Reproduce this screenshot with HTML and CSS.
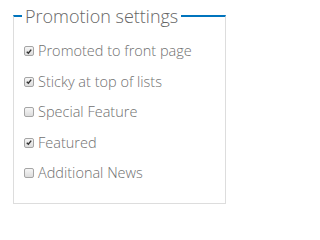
FILE: index.html
```html
<!DOCTYPE html>
<html>
<head>
<meta charset="utf-8">
<link rel="stylesheet" href="styles.css">
</head>
<body>
<fieldset class="promo">
  <legend class="promo-legend">Promotion settings</legend>
  <ul class="options">
    <li class="option"><span class="box checked"><svg viewBox="0 0 10 10" width="10" height="10"><path d="M2.2 5.2 L4.2 7.2 L7.8 2.6" fill="none" stroke="#333" stroke-width="1.8"/></svg></span><span class="label">Promoted to front page</span></li>
    <li class="option"><span class="box checked"><svg viewBox="0 0 10 10" width="10" height="10"><path d="M2.2 5.2 L4.2 7.2 L7.8 2.6" fill="none" stroke="#333" stroke-width="1.8"/></svg></span><span class="label">Sticky at top of lists</span></li>
    <li class="option"><span class="box"></span><span class="label">Special Feature</span></li>
    <li class="option"><span class="box checked"><svg viewBox="0 0 10 10" width="10" height="10"><path d="M2.2 5.2 L4.2 7.2 L7.8 2.6" fill="none" stroke="#333" stroke-width="1.8"/></svg></span><span class="label">Featured</span></li>
    <li class="option"><span class="box"></span><span class="label">Additional News</span></li>
  </ul>
</fieldset>
</body>
</html>
```
FILE: styles.css
```css
html, body {
  margin: 0;
  padding: 0;
  background: #fff;
}
body {
  padding: 7px 12px 0 13px;
  font-family: "Open Sans", sans-serif;
  color: #707070;
}
.promo {
  margin: 0;
  width: 213px;
  height: 197px;
  box-sizing: border-box;
  border: 1px solid #ddd;
  border-top: 2px solid #0074bd;
  padding: 0 8px 0 10px;
  min-width: 0;
}
.promo-legend {
  font-size: 18px;
  font-weight: 300;
  color: #666;
  padding: 0 3px;
  line-height: 18px;
  margin-left: -2px;
}
.options {
  list-style: none;
  margin: 0;
  padding: 16px 0 0 0;
  display: flex;
  flex-direction: column;
  gap: 10.5px;
}
.option {
  display: flex;
  align-items: center;
  height: 20px;
  font-size: 14.5px;
  font-weight: 300;
  line-height: 20px;
}
.box {
  width: 8px;
  height: 8px;
  border: 1px solid #a5a5a5;
  border-radius: 2px;
  background: linear-gradient(#f6f6f6, #dcdcdc);
  margin-right: 4px;
  display: flex;
  align-items: center;
  justify-content: center;
  flex: none;
}
.box svg {
  display: block;
  width: 9px;
  height: 9px;
}
.label {
  white-space: nowrap;
}
```
